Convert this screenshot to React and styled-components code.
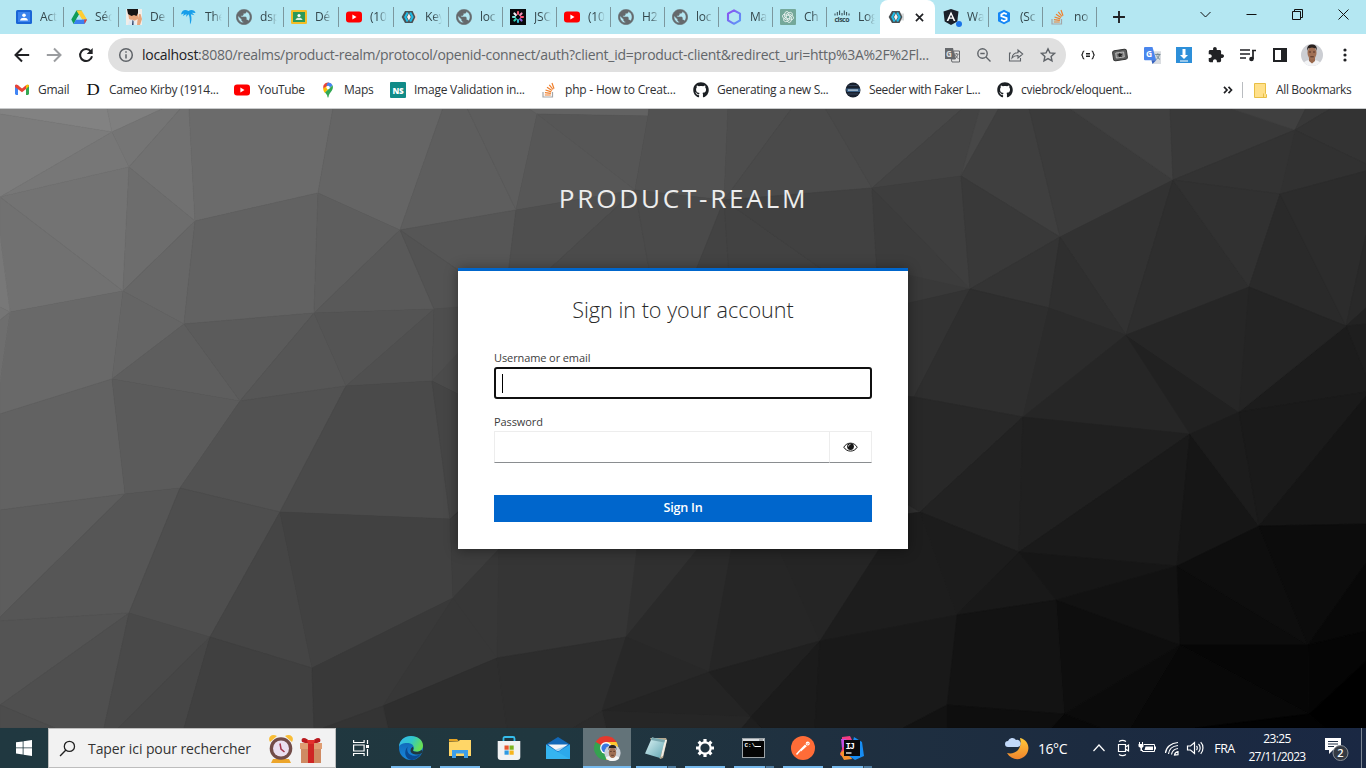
import React from "react";
import styled, { createGlobalStyle, css } from "styled-components";
import { FaGithub } from "react-icons/fa";

const Global = createGlobalStyle`
  * { box-sizing: border-box; }
  html, body { margin: 0; padding: 0; }
  body { width: 1366px; height: 768px; overflow: hidden; font-family: "Open Sans", "Noto Sans", sans-serif; }
  svg { display: block; flex: none; }
`;

const Screen = styled.div`
  width: 1366px;
  height: 768px;
  display: grid;
  grid-template-rows: 34px 38px 36px 620px 40px;
  overflow: hidden;
`;

/* ---------- tab strip ---------- */
const TabStrip = styled.div`
  background: #b4e7f2;
  display: flex;
  padding-left: 8px;
  min-width: 0;
`;
const dividerImage = css`
  background: linear-gradient(#7c979e, #7c979e) left 0 top 7px / 1px 20px no-repeat;
`;
const Tab = styled.div`
  width: ${(p) => p.$w}px;
  height: 34px;
  flex: none;
  display: flex;
  align-items: center;
  padding-left: 8px;
  gap: 8px;
  ${(p) => p.$divider && dividerImage}
  ${(p) => p.$active && css`
    background: #fff;
    gap: 9px;
    border-radius: 8px 8px 0 0;
  `}
`;
const TabLabel = styled.span`
  width: 23px;
  flex: none;
  white-space: nowrap;
  font-size: 12px;
  line-height: 18px;
  letter-spacing: -0.2px;
  color: #34474c;
  mask-image: linear-gradient(90deg, #000 8px, transparent 17px);
`;
const NewTab = styled.div`
  width: 46px;
  display: flex;
  justify-content: center;
  align-items: center;
  ${dividerImage}
`;
const WindowButtons = styled.div`
  margin-left: auto;
  display: flex;
  height: 29px;
  align-items: center;
`;
const WindowButton = styled.div`
  width: 46px;
  display: flex;
  justify-content: center;
`;

/* ---------- toolbar ---------- */
const Toolbar = styled.div`
  background: #fff;
  display: flex;
  align-items: center;
  padding: 4px 5px 0 6px;
`;
const ToolSlot = styled.div`
  width: ${(p) => p.$w || 32}px;
  flex: none;
  display: flex;
  align-items: center;
  justify-content: center;
`;
const Omnibox = styled.div`
  width: 958px;
  height: 34px;
  margin-left: 6px;
  margin-right: 6px;
  border-radius: 17px;
  background: #e0e0e0;
  display: flex;
  align-items: center;
  padding: 0 2px 0 10px;
`;
const Url = styled.div`
  width: 794px;
  margin-left: 8px;
  white-space: nowrap;
  font-size: 14px;
  line-height: 20px;
  letter-spacing: -0.282px;
  color: #63666a;
  span { color: #202124; }
`;

/* ---------- bookmarks ---------- */
const BookmarkBar = styled.div`
  background: #fff;
  display: flex;
  align-items: center;
  padding-left: 14px;
`;
const Bookmark = styled.div`
  width: ${(p) => p.$w}px;
  flex: none;
  display: flex;
  align-items: center;
  gap: ${(p) => p.$gap || 8}px;
  white-space: nowrap;
  font-size: 12px;
  line-height: 18px;
  letter-spacing: ${(p) => p.$ls || -0.25}px;
  color: #303134;
`;
const Divider = styled.div`
  width: 1px;
  height: 16px;
  background: #b9bcc0;
  margin: 0 11px 0 8px;
`;

/* ---------- page ---------- */
const Page = styled.main`
  display: grid;
  grid-template: 620px / 1366px;
  border-top: 1px solid #c8cacb;
  overflow: hidden;
`;
const Facets = styled.svg`
  grid-area: 1 / 1;
  margin-top: -1px;
`;
const Login = styled.div`
  grid-area: 1 / 1;
  z-index: 1;
  display: flex;
  flex-direction: column;
  align-items: center;
`;
const Realm = styled.h1`
  margin: 70px 0 0;
  height: 89px;
  font-size: 26.2px;
  font-weight: 400;
  line-height: 38px;
  letter-spacing: 2.7px;
  color: #ededed;
  padding-left: 1px;
`;
const Card = styled.form`
  width: 450px;
  height: 281px;
  background: #fff;
  border-top: 3px solid #0066cc;
  box-shadow: 0 1px 12px rgba(3, 3, 3, 0.4);
  padding: 24px 36px 0;
`;
const CardTitle = styled.h2`
  margin: 0;
  text-align: center;
  font-size: 21.6px;
  font-weight: 300;
  line-height: 30px;
  height: 54px;
  color: #2a2a2a;
`;
const Label = styled.label`
  display: block;
  height: 18px;
  line-height: 18px;
  font-size: 11px;
  letter-spacing: -0.1px;
  color: #3c3c3c;
`;
const UserField = styled.div`
  height: 32px;
  border: 2px solid #101010;
  border-radius: 3px;
  margin-bottom: 14px;
  padding: 5px 6px;
`;
const Caret = styled.div`
  width: 1px;
  height: 19px;
  background: #000;
`;
const PasswordRow = styled.div`
  display: grid;
  grid-template-columns: 335px 43px;
  height: 32px;
`;
const PasswordField = styled.div`
  border: 1px solid #ededed;
  border-bottom-color: #8a8d90;
  border-right: 0;
`;
const Reveal = styled.div`
  border: 1px solid #ededed;
  border-bottom-color: #8a8d90;
  display: flex;
  align-items: center;
  justify-content: center;
`;
const Submit = styled.div`
  margin-top: 32px;
  height: 27px;
  background: #0066cc;
  color: #fff;
  text-align: center;
  font-size: 12.6px;
  font-weight: 600;
  letter-spacing: -0.2px;
  line-height: 25px;
`;

/* ---------- taskbar ---------- */
const Taskbar = styled.footer`
  display: flex;
  color: #fff;
  background: linear-gradient(90deg, #203840 0%, #20373f 40%, #1f3040 60%, #1c2b40 80%, #1a2843 100%);
`;
const Start = styled.div`
  width: 48px;
  display: flex;
  align-items: center;
  justify-content: center;
`;
const Search = styled.div`
  width: 288px;
  background: #f2f2f2;
  border: 1px solid #bdbdbd;
  display: flex;
  align-items: center;
  padding-left: 10px;
`;
const SearchText = styled.span`
  width: 180px;
  margin-left: 12px;
  white-space: nowrap;
  font-size: 14px;
  letter-spacing: -0.08px;
  color: #333;
`;
const AppSlot = styled.div`
  width: ${(p) => p.$w || 49}px;
  flex: none;
  display: grid;
  grid-template-rows: 36px 2px;
  padding-top: 2px;
  justify-items: center;
  align-items: center;
  background: ${(p) => (p.$active ? "linear-gradient(#637379, #637379) 1px 0 / 48px 40px no-repeat" : "transparent")};
`;
const Underline = styled.div`
  height: 2px;
  width: ${(p) => (p.$full ? 48 : 40)}px;
  justify-self: ${(p) => (p.$full ? "end" : "center")};
  background: ${(p) => (p.$stack
    ? "linear-gradient(90deg, #76b9ed 31px, #31495a 31px 32px, #4f7ca0 32px)"
    : "#76b9ed")};
`;
const Tray = styled.div`
  margin-left: auto;
  width: 362px;
  display: flex;
  align-items: center;
  font-size: 12px;
`;
const TrayItem = styled.div`
  width: ${(p) => p.$w}px;
  flex: none;
  display: flex;
  align-items: center;
  justify-content: center;
  white-space: nowrap;
`;
const Temperature = styled(TrayItem)`
  font-size: 14px;
  letter-spacing: -0.45px;
`;
const Language = styled(TrayItem)`
  font-size: 12.5px;
  letter-spacing: -0.5px;
`;
const Clock = styled.div`
  width: 84px;
  text-align: center;
  font-size: 12px;
  line-height: 18px;
  letter-spacing: -0.65px;
  margin-bottom: 1px;
`;
const ShowDesktop = styled.div`
  align-self: stretch;
  margin-left: auto;
  width: 5px;
  border-left: 1px solid #7b8593;
`;

/* ---------- small icons ---------- */
const Svg = ({ s = 16, w, h, vb, children }) => (
  <svg width={w || s} height={h || s} viewBox={vb || "0 0 16 16"} fill="none">{children}</svg>
);
const Contact = () => (
  <Svg><rect y="1" width="16" height="14" rx="1.5" fill="#1a65d6" /><rect x="2" y="3" width="12" height="10" fill="#3b83ee" /><circle cx="8" cy="6.3" r="1.8" fill="#fff" /><path d="M4 11.5c.4-2 2-2.7 4-2.7s3.600.7 4 2.700z" fill="#fff" /></Svg>
);
const Classroom = () => (
  <Svg><rect y="1" width="16" height="14" rx="1.200" fill="#f4bd26" /><rect x="2" y="3" width="12" height="10" fill="#2b9958" /><circle cx="8" cy="6.500" r="1.600" fill="#fff" /><path d="M4.500 11c.4-1.700 1.700-2.200 3.500-2.200s3.100.5 3.500 2.200z" fill="#d9efdf" /></Svg>
);
const Drive = () => (
  <Svg><path d="M5.400 1.500h5.200l-5.500 9.300L2.600 15 .3 10.500z" fill="#109c58" /><path d="M5.400 1.500h5.200L16 10.500h-5z" fill="#ffcd33" /><path d="M5 10.500h11l-2.500 4.500H2.600z" fill="#3b7ff0" /><path d="M8 5.800 5.100 10.500H11z" fill="#b4e7f2" /><path d="M13.200 10.500H16l-2.500 4.500z" fill="#e74335" /></Svg>
);
const Character = () => (
  <Svg><rect width="16" height="16" fill="#f1ede8" /><path d="M2 3h10v7l-4 2-5-2z" fill="#e6a47a" /><path d="M1 0h11v4l-1.500 3L8 6 5.500 7 2 5z" fill="#171515" /><path d="M13 5h1.500l1.500 5-2 6h-3l.5-5z" fill="#e6a47a" /><path d="M3 12l3-1.500L9 12l1 4H2z" fill="#dfe9f3" /><path d="M6.500 11l1 1v4H6z" fill="#263b62" /></Svg>
);
const Palm = () => (
  <Svg><path d="M0 5.500C1 1 4 0 7.500 2 10 .2 14 1 14.500 4L11 3.800l2.500 2.400L9.800 5.200C11 9 10.500 13 9 15.600 9 11 8.800 7.500 7.600 5.300L5 8 5.600 5 1.800 7 3 4.500z" fill="#179eea" /></Svg>
);
const Earth = () => (
  <Svg vb="1.500 1.500 21 21"><path d="M12 2C6.480 2 2 6.480 2 12s4.480 10 10 10 10-4.480 10-10S17.520 2 12 2zm-1 17.930c-3.950-.490-7-3.850-7-7.930 0-.620.080-1.210.210-1.790L9 15v1c0 1.100.9 2 2 2v1.930zm6.900-2.540c-.260-.810-1-1.390-1.900-1.390h-1v-3c0-.550-.450-1-1-1H8v-2h2c.550 0 1-.450 1-1V7h2c1.100 0 2-.9 2-2v-.410c2.930 1.190 5 4.060 5 7.410 0 2.080-.8 3.970-2.100 5.390z" fill="#65696c" stroke="#65696c" strokeWidth=".8" /></Svg>
);
const Keycloak = () => (
  <Svg><path d="M11 4.500h5v7h-5z" fill="#d9dcdd" /><path d="M4 2h7.600l2.800 6-2.800 6H4L.6 8z" fill="#4b5053" /><path d="M6.600 3.600 4.200 8l2.400 4.400M9.200 3.600 11.600 8l-2.400 4.400" stroke="#20bde8" strokeWidth="2" /><path d="M7.900 4.500l1.900 3.500-1.900 3.500L6 8z" fill="#f3f5f6" /></Svg>
);
const YoutubeIcon = () => (
  <Svg><rect y="2.500" width="16" height="11" rx="3" fill="#f00" /><path d="M6.400 5.600v4.800L10.500 8z" fill="#fff" /></Svg>
);
const Json = () => (
  <Svg><rect width="16" height="16" fill="#080a0d" /><g strokeWidth="2.100" strokeLinecap="round"><path d="M8 3v2" stroke="#f15a72" /><path d="M11.600 4.400l-1.500 1.500" stroke="#f093b8" /><path d="M13 8h-2" stroke="#ff4c70" /><path d="M11.600 11.600l-1.500-1.500" stroke="#8e61d8" /><path d="M8 13v-2" stroke="#38bbd1" /><path d="M4.400 11.600l1.500-1.500" stroke="#31d9b4" /><path d="M3 8h2" stroke="#79e4dd" /><path d="M4.400 4.400l1.500 1.500" stroke="#f3eef5" /></g></Svg>
);
const Hexagon = () => (
  <Svg><defs><linearGradient id="hex" x1="0" y1="0" x2="1" y2="1"><stop stopColor="#8d4cf0" /><stop offset="1" stopColor="#5a9df8" /></linearGradient></defs><path d="M8 1.300l6 3.400v6.700L8 14.800l-6-3.400V4.700z" stroke="url(#hex)" strokeWidth="2.100" strokeLinejoin="round" /></Svg>
);
const OpenAI = () => (
  <Svg><rect width="16" height="16" rx="1" fill="#74a89a" /><g stroke="#fff" strokeWidth=".8">{[0, 60, 120, 180, 240, 300].map((a) => <path key={a} transform={`rotate(${a} 8 8)`} d="M6.200 9V5.300l3-1.700c2-1 4 1 2.800 3" />)}</g></Svg>
);
const Cisco = () => (
  <Svg><path d="M1 4.500v2M3.300 3v3.500M5.600 1.500v4.500M8 4v2.500M10.300 1.500v4.500M12.600 3v3.500M15 4.500v2" stroke="#30474e" /><text x="8" y="12.800" textAnchor="middle" fontFamily="Open Sans" fontWeight="700" fontSize="7" textLength="15" fill="#30474e">cisco</text></Svg>
);
const AngularBox = styled.div`
  width: 16px;
  height: 19px;
  overflow: visible;
`;
const Angular = () => (
  <AngularBox><svg width="19" height="19" viewBox="0 0 19 19"><path d="M8 1l7.500 2.500-1.200 10L8 17l-6.300-3.500L.5 3.500z" fill="#1b2029" /><path d="M8 3.500 3.600 13h1.800l1-2.300h3.300l1 2.300h1.700zM8 6.800l1.300 2.600H6.800z" fill="#fff" /><circle cx="16" cy="16" r="3" fill="#1a73e8" /></svg></AngularBox>
);
const BlueS = () => (
  <Svg><path d="M8 .8l6 3v8.400l-6 3-6-3V3.800z" fill="#1586f5" /><path d="M10.800 5.300 8 4 5.300 5.600v1.600l5.300 2v1.500L8 12.200 5.100 10.800" stroke="#fff" strokeWidth="1.800" /></Svg>
);
const StackIcon = () => (
  <Svg><path d="M2 10v5h9.500v-5" stroke="#a4a6a8" strokeWidth="1.200" /><g stroke="#ef7f2c" strokeWidth="1.200"><path d="M3.800 13h6M3.900 10.600l6 .7M4.500 8l5.800 1.900M6 5.200l5 3.400M8.300 2.800l3.700 4.700M11 1l2 5.700" /></g></Svg>
);
const Gmail = () => (
  <Svg><path d="M1 3h3v10H2L1 12z" fill="#4285f4" /><path d="M12 3h3v9l-1 1h-2z" fill="#34a853" /><path d="M1 3.500C1.500 2 3 2.500 4 3.200L8 6.400v3.800L1 5z" fill="#ea4335" /><path d="M8 6.400l4-3.200V7l-4 3.200z" fill="#ea4335" /><path d="M12 3.200c1.500-1.200 3-.5 3 1L12 7z" fill="#fbbc04" /></Svg>
);
const LetterD = () => (
  <Svg h={20} vb="0 0 16 20"><text x="1.500" y="15.400" fontFamily="Liberation Serif" fontSize="16.500" textLength="13" lengthAdjust="spacingAndGlyphs" fill="#111">D</text></Svg>
);
const MapPin = () => (
  <Svg><path d="M8 .5a5 5 0 0 0-3.900 1.800L8 5.500 11.500 2A5 5 0 0 0 8 .5z" fill="#ea4335" /><path d="M8 .5a5 5 0 0 1 4.600 2.800L8.800 6.800 6 3.500z" fill="#4285f4" /><path d="M4.100 2.300A5.300 5.300 0 0 0 3.200 7L7.500 3.800z" fill="#ea4335" /><path d="M3.200 6.500 7 4l1 3-3 4C3.800 9.500 3.200 8 3.200 6.500z" fill="#fbbc04" /><path d="M12.600 3.300c1.700 5.200-3.500 6.700-4.100 11.700-.2.700-.8.700-1 0-.2-1.900-1.300-3-2.500-4.400z" fill="#34a853" /><circle cx="8.100" cy="5.500" r="1.700" fill="#fff" /></Svg>
);
const NsIcon = () => (
  <Svg><rect width="16" height="16" rx="1" fill="#118b88" /><text x="8" y="11.500" textAnchor="middle" fontFamily="Open Sans" fontSize="8.500" fontWeight="800" textLength="11" lengthAdjust="spacingAndGlyphs" fill="#fff">NS</text></Svg>
);
const Seeder = () => (
  <Svg><circle cx="8" cy="8" r="7.500" fill="#18202d" /><path d="M3.500 3.500h9M3 12h10" stroke="#34435a" /><path d="M1 6.500h14v3.500H2z" fill="#375d84" /><path d="M3 7.500h10v1.200H3z" fill="#c8d4de" /></Svg>
);
const GithubIcon = () => <FaGithub size={16} color="#1b1f23" />;
const Folder = () => (
  <Svg w={13} h={15} vb="0 0 13 15"><path d="M.5.500h11v10l1 1v3H.5z" fill="#ffe08a" stroke="#e8bf45" /><path d="M9.500 10.500v4" stroke="#e8bf45" /></Svg>
);

const TABS = [
  [55, Contact, "Act"], [55, Drive, "Séc"], [55, Character, "De"], [55, Palm, "Thé"],
  [55, Earth, "dsp"], [55, Classroom, "Dé"], [55, YoutubeIcon, "(10"], [55, Keycloak, "Key"],
  [54, Earth, "loc"], [54, Json, "JSO"], [54, YoutubeIcon, "(10"], [54, Earth, "H2"],
  [54, Earth, "loc"], [54, Hexagon, "Ma"], [54, OpenAI, "Ch"], [54, Cisco, "Log"],
];
const LATER_TABS = [[53, Angular, "Wa"], [54, BlueS, "(Sc"], [54, StackIcon, "no"]];

const BOOKMARKS = [
  [71, Gmail, "Gmail"], [149, LetterD, "Cameo Kirby (1914..."], [86, YoutubeIcon, "YouTube", -0.4],
  [70, MapPin, "Maps"], [151, NsIcon, "Image Validation in..."], [152, StackIcon, "php - How to Creat...", -0.2],
  [152, GithubIcon, "Generating a new S...", -0.3], [152, Seeder, "Seeder with Faker L...", -0.35],
  [225, GithubIcon, "cviebrock/eloquent...", -0.3],
];

/* Facets of the low-poly backdrop: [grey level, outline] */
const FACETS = [
  [130, "0,108 107,108 112,132 0,114"], [127, "107,108 164,108 112,132"], [124, "0,114 112,132 0,197"],
  [119, "112,132 129,167 0,197"], [117, "164,108 181,108 129,167 112,132"], [113, "181,108 189,108 195,221 129,167"],
  [107, "189,108 333,108 318,193 195,221"], [101, "333,108 443,108 400,230 318,193"], [94, "443,108 467,108 516,210 400,230"],
  [115, "0,197 129,167 123,291"], [113, "0,197 123,291 10,312 0,236"], [120, "0,236 10,312 0,307"], [117, "0,307 10,312 0,320"],
  [109, "129,167 195,221 123,291"], [103, "195,221 184,324 123,291"], [98, "195,221 318,193 314,313 184,324"],
  [94, "318,193 400,230 314,313"], [89, "400,230 434,309 314,313"], [105, "10,312 123,291 112,379 0,414 0,382"],
  [110, "0,320 10,312 0,382"], [101, "123,291 184,324 112,379"], [94, "184,324 240,401 112,379"],
  [91, "184,324 314,313 240,401"], [86, "314,313 346,386 240,401"], [84, "314,313 434,309 346,386"],
  [80, "434,309 432,381 346,386"], [86, "400,230 516,210 508,275 458,270"], [83, "400,230 458,270 470,308 434,309"],
  [78, "434,309 470,306 470,342 432,381"], [75, "432,381 470,340 470,400"], [98, "0,414 112,379 125,494 0,510"],
  [91, "112,379 240,401 180,488 125,494"], [82, "240,401 346,386 280,512 180,488"], [74, "346,386 432,381 450,519 280,512"],
  [69, "432,381 470,400 470,500 450,519"], [93, "0,510 125,494 0,617"], [86, "125,494 180,488 129,613 0,621 0,617"],
  [78, "180,488 280,512 210,637 129,613"], [69, "280,512 312,668 210,637"], [65, "280,512 450,519 453,598 312,668"],
  [61, "450,519 499,480 499,549 453,598"], [84, "0,621 129,613 0,705"], [79, "129,613 104,728 55,728 0,705"],
  [76, "0,705 55,728 0,728"], [73, "129,613 210,637 118,728 104,728"], [70, "210,637 184,728 118,728"],
  [64, "210,637 312,668 314,728 184,728"], [57, "312,668 453,598 383,706 323,728 314,728"], [55, "453,598 497,658 383,706"],
  [46, "383,706 497,658 507,728 388,728"], [52, "383,706 388,728 323,728"], [55, "453,598 499,549 497,658"],
  [53, "499,540 638,540 626,637 497,658"], [45, "497,658 626,637 602,711 573,728 507,728"], [48, "638,540 705,540 626,637"],
  [42, "705,540 733,540 709,672 626,637"], [38, "733,540 775,540 820,641 709,672"], [37, "775,540 885,540 820,641"],
  [40, "626,637 709,672 602,711"], [36, "709,672 751,717 602,711"], [38, "602,711 751,717 742,728 606,728"],
  [43, "602,711 606,728 573,728"], [32, "709,672 820,641 751,717"], [27, "820,641 815,728 761,728 751,717"],
  [30, "742,728 751,717 761,728"], [29, "885,540 900,515 920,512 957,615 820,641"], [25, "820,641 957,615 947,705 903,728 815,728"],
  [93, "467,108 528,108 537,114 516,210"], [98, "528,108 649,108 648,116 537,114"], [86, "537,114 648,116 635,190"],
  [87, "537,114 635,190 516,210"], [79, "516,210 635,190 543,275 508,275"], [82, "649,108 728,108 724,200 635,190 648,116"],
  [77, "728,108 792,108 724,200"], [74, "792,108 825,108 872,188 724,200"], [72, "825,108 963,108 872,188"],
  [75, "635,190 650,275 543,275"], [74, "635,190 724,200 694,275 650,275"], [67, "724,200 729,275 694,275"],
  [66, "724,200 830,275 729,275"], [65, "724,200 872,188 877,275 830,275"], [60, "872,188 970,289 877,275"],
  [67, "872,188 963,108 980,108 961,176"], [71, "980,108 999,108 961,176"], [62, "872,188 961,176 970,289"],
  [63, "999,108 1029,108 1060,237 961,176"], [57, "961,176 1060,237 970,289"], [59, "1029,108 1069,108 1173,180 1060,237"],
  [64, "1069,108 1170,108 1173,180"], [57, "1170,108 1229,108 1295,130 1173,180"], [64, "1229,108 1306,108 1295,130"],
  [56, "1306,108 1332,108 1295,130"], [51, "1332,108 1366,108 1366,164 1295,130"], [49, "1295,130 1366,164 1366,171 1280,194"],
  [51, "1173,180 1295,130 1280,194"], [50, "1060,237 1173,180 1126,335"], [46, "1173,180 1249,287 1126,335"],
  [49, "1173,180 1280,194 1249,287"], [42, "1280,194 1346,326 1249,287"], [44, "1280,194 1366,171 1366,235 1346,326"],
  [41, "1366,235 1366,308 1346,326"], [34, "1346,326 1366,308 1366,324"], [30, "1346,326 1366,324 1366,376"],
  [28, "1346,326 1366,376 1366,392 1239,412"], [52, "970,289 1060,237 1049,308"], [47, "1060,237 1126,335 1049,308"],
  [57, "877,268 970,289 906,304 877,310"], [51, "900,305 970,289 914,397 900,400"], [46, "970,289 1049,308 1023,417 914,397"],
  [43, "1049,308 1126,335 1023,417"], [38, "1126,335 1190,434 1023,417"], [33, "1126,335 1239,412 1190,434"],
  [38, "1126,335 1249,287 1239,412"], [36, "1249,287 1346,326 1239,412"], [40, "900,395 914,397 1023,417 920,512 900,500"],
  [34, "1023,417 1019,552 920,512"], [32, "1023,417 1190,434 1019,552"], [26, "1190,434 1177,566 1019,552"],
  [22, "1190,434 1259,526 1177,566"], [28, "1190,434 1239,412 1259,526"], [26, "1239,412 1366,392 1366,396 1259,526"],
  [21, "1366,396 1366,524 1259,526"], [28, "920,512 1019,552 957,615"], [25, "1019,552 1056,600 957,615"],
  [22, "1019,552 1177,566 1056,600"], [18, "1056,600 1177,566 1180,645"], [14, "1056,600 1180,645 1064,714"],
  [19, "957,615 1056,600 1064,714 947,705"], [12, "1177,566 1308,645 1180,645"], [14, "1177,566 1259,526 1308,645"],
  [12, "1259,526 1366,524 1366,563 1308,645"], [8, "1308,645 1366,563 1366,631"], [5, "1308,645 1366,631 1366,661 1309,714"],
  [6, "1180,645 1308,645 1309,714"], [8, "1180,645 1309,714 1195,728 1130,728"], [11, "1064,714 1180,645 1130,728 1101,728"],
  [8, "1064,714 1101,728 1051,728"], [14, "947,705 1064,714 1051,728 947,728"], [18, "947,705 947,728 903,728"],
  [0, "1309,714 1366,661 1366,728 1325,728"], [2, "1195,728 1309,714 1325,728"],
];

const Backdrop = () => (
  <Facets width="1366" height="620" viewBox="0 108 1366 620">
    <rect y="108" width="1366" height="620" fill="#303030" />
    {FACETS.map(([g, pts]) => (
      <polygon key={pts} points={pts} fill={`rgb(${g},${g},${g})`} stroke={`rgb(${g},${g},${g})`} strokeWidth=".6" />
    ))}
  </Facets>
);

/* ---------- toolbar drawings ---------- */
const Line = ({ s = 20, d, c = "#202124", sw = 2, children }) => (
  <svg width={s} height={s} viewBox="0 0 20 20" fill="none" stroke={c} strokeWidth={sw}>{d && <path d={d} />}{children}</svg>
);
const ReloadIcon = () => (
  <Line d="M14.800 6.300A6 6 0 1 0 16 11.300"><path d="M16.700 3v6h-6z" fill="#202124" stroke="none" /></Line>
);
const PuzzleIcon = () => (
  <Svg vb="1 1 22 22"><path d="M20.500 11H19V7c0-1.100-.9-2-2-2h-4V3.500C13 2.120 11.880 1 10.500 1S8 2.120 8 3.500V5H4c-1.100 0-1.990.9-1.990 2v3.800H3.500c1.490 0 2.700 1.210 2.700 2.700s-1.210 2.700-2.700 2.700H2V20c0 1.100.9 2 2 2h3.800v-1.500c0-1.490 1.210-2.700 2.700-2.700 1.490 0 2.700 1.210 2.700 2.700V22H17c1.100 0 2-.9 2-2v-4h1.500c1.380 0 2.500-1.120 2.500-2.500S21.880 11 20.500 11z" fill="#202124" /></Svg>
);
const TranslatePage = () => (
  <Svg><path d="M1 1h8l2.500 11H1z" fill="#67696c" /><path d="M9.500 4h6v11H8l-.8-3h4.200z" fill="#e4e4e4" stroke="#67696c" /><text x="2" y="9.500" fontFamily="Open Sans" fontWeight="700" fontSize="8" fill="#e0e0e0">G</text><path d="M10.500 7h4M12.500 6v1M14 7c-.5 2.500-1.600 3.700-3 4.700M11.500 8c.6 1.700 1.500 2.700 3 3.600" stroke="#67696c" strokeWidth=".9" /></Svg>
);
const GoogleTranslate = () => (
  <Svg s={17}><path d="M6 4h10v12H8z" fill="#dadde1" /><path d="M1 0h7l3.500 12.500H1a1 1 0 0 1-1-1V1a1 1 0 0 1 1-1z" fill="#4a86ed" /><path d="M8 16l3.500-3.500H7z" fill="#3461bf" /><text x="1.800" y="9" fontFamily="Open Sans" fontWeight="700" fontSize="8" fill="#fff">G</text><path d="M10.500 7h5M13 6v1M14.500 7c-.5 2.500-1.600 3.700-3 4.700M12 8c.6 1.700 1.500 2.700 3 3.600" stroke="#6c8490" strokeWidth=".9" /></Svg>
);
const Portrait = ({ s = 22 }) => (
  <svg width={s} height={s} viewBox="0 0 22 22">
    <defs><clipPath id={`face${s}`}><circle cx="11" cy="11" r="11" /></clipPath></defs>
    <g clipPath={`url(#face${s})`}>
      <rect width="22" height="22" fill="#ccced3" />
      <path d="M1 22c1-5 5-6 10-6s9 1 10 6z" fill="#f3f4f6" />
      <path d="M8 13h6v4l-3 2.500L8 17z" fill="#99684c" />
      <ellipse cx="11" cy="9" rx="4.500" ry="6.500" fill="#a06f54" />
      <path d="M6.300 7C5.500 2 8 .5 11 .5s5.500 1.500 4.700 6.500L15 4.400 11 3.600 7 4.400z" fill="#29211f" />
      <path d="M7.800 8h2.200M12 8h2.200M9.300 12.800h3.500" stroke="#523327" strokeWidth="1" />
    </g>
  </svg>
);
const EyeIcon = () => (
  <svg width="15" height="12" viewBox="0 0 15 12"><path d="M.8 6.200C3.800.8 11.200.8 14.200 6.200 11.200 11.400 3.800 11.400.8 6.200z" fill="#fff" stroke="#151515" strokeWidth="1" /><circle cx="7.500" cy="5.600" r="3.400" fill="#151515" /><path d="M5.400 5.500c0-1.200.9-2 2-2" stroke="#fff" strokeWidth=".8" fill="none" /></svg>
);

/* ---------- taskbar drawings ---------- */
const WinLogo = () => (
  <Svg><path d="M0 2.300 6.700 1.400v6.100H0zM7.500 1.300 16 0v7.500H7.500zM0 8.300h6.700v6.100L0 13.500zM7.500 8.300H16V16l-8.500-1.200z" fill="#fff" /></Svg>
);
const AlarmClock = () => (
  <svg width="26" height="29" viewBox="0 0 26 29"><path d="M2 8C-1 3 4-1 9 2zM24 8c3-5-2-9-7-6z" fill="#f9bd35" /><path d="M5 25h16l2 4H3z" fill="#eca52b" /><circle cx="13" cy="14.500" r="11.300" fill="#724c49" /><circle cx="13" cy="14.500" r="8" fill="#eadff0" /><path d="M12 9.500l1 5.500 3.500 3" stroke="#a33349" strokeWidth="1.500" fill="none" /></svg>
);
const Gift = () => (
  <svg width="24" height="26" viewBox="0 0 24 26"><path d="M2 10h20v16H2z" fill="#cf8a62" /><path d="M1 6h22v6H1z" fill="#df9d72" /><path d="M9 6h6v20H9z" fill="#cf2524" /><path d="M12 6C7-1 1 0 3 5l3 1zM12 6c5-7 11-6 9-1l-3 1z" fill="#b9191e" /><path d="M8 3h8l-1 4H9z" fill="#e3312d" /></svg>
);
const GiftSlot = styled.div`
  width: 33px;
  padding-top: 4px;
  display: flex;
  justify-content: center;
`;
const TaskView = () => (
  <svg width="17" height="16" viewBox="0 0 17 16" fill="none" stroke="#fff" strokeWidth="1.200"><path d="M.6 0v2.500h10.500V0M.6 16v-2.500h10.500V16M.6 5h10.500v6H.6zM14.500 0v4M14.500 9v7" /><path d="M13 5h3v3h-3z" fill="#fff" stroke="none" /></svg>
);
const EdgeIcon = () => (
  <svg width="24" height="24" viewBox="0 0 24 24"><defs><linearGradient id="e1" x2="1" y2=".4"><stop stopColor="#35b8f1" /><stop offset=".55" stopColor="#31c7c9" /><stop offset="1" stopColor="#67df55" /></linearGradient><linearGradient id="e2" x2="0" y2="1"><stop stopColor="#0f5fae" /><stop offset="1" stopColor="#1788dc" /></linearGradient></defs><circle cx="12" cy="12" r="12" fill="url(#e2)" /><path d="M0 11C0 4.500 5.500 0 12 0s12 4 12 9.500c0 4-3 6.300-6.500 6.300-2.500 0-4-.9-3.300-2 1.500-2 .4-5.300-3-6.300C7 6.200 1 7.500 0 11z" fill="url(#e1)" /><path d="M8.700 10.500c-1.700 4.500.8 9 6.800 9.300 3 .1 5-1.100 6.500-2.300C20 21.500 16 24 12 24 6.500 23 4 16 8.700 10.500z" fill="#0b4a92" /><path d="M14.200 13.800c-.7 1.100.8 2 3.300 2 2 0 3.800-.8 4.900-1.900 1.600.5 1.600 2.200.2 3.300-3.800 2.500-11.100 1.100-11.100-2.500 0-2 1.100-3.300 2.300-4 .8 1 .9 2.200.4 3.100z" fill="#203840" /></svg>
);
const ExplorerIcon = () => (
  <svg width="22" height="20" viewBox="0 0 22 20"><path d="M0 1h8l2 2.500H0z" fill="#e6a424" /><path d="M0 4l9-.500L11 2h11v16H0z" fill="#ffd667" /><path d="M3 20v-8h16v8h-4v-4H7v4z" fill="#3e9fe9" /><path d="M7 15.500h8V18H7z" fill="#ffd667" /></svg>
);
const StoreIcon = () => (
  <svg width="24" height="24" viewBox="0 0 24 24"><path d="M6.500 5V2.500c0-.8.500-1.500 1.500-1.500h8c1 0 1.500.7 1.500 1.500V5" stroke="#35bdec" strokeWidth="1.800" fill="none" /><path d="M.7 5h22.600v16a3 3 0 0 1-3 3H3.700a3 3 0 0 1-3-3z" fill="#f1f2f3" /><path d="M7.500 9.500h4.200v4.200H7.500z" fill="#e8552d" /><path d="M12.500 9.500h4.200v4.200h-4.200z" fill="#7db41f" /><path d="M7.500 14.500h4.200v4.200H7.500z" fill="#2e9ae3" /><path d="M12.500 14.500h4.200v4.200h-4.200z" fill="#f6b51c" /></svg>
);
const MailIcon = () => (
  <svg width="24" height="22" viewBox="0 0 24 22"><path d="M0 7.500 12 0l12 7.500V22H0z" fill="#1268b7" /><path d="M0 7.500 12 15l12-7.500V22H0z" fill="#35b4f0" /><path d="M2 7.500h20l-9 6.600h-2z" fill="#f4f5f7" /><path d="M24 7.500V22L8 13z" fill="#1d96e4" opacity=".35" /></svg>
);
const ChromeIcon = () => (
  <svg width="28" height="28" viewBox="0 0 28 28"><path d="M13 14 2.600 8A12 12 0 0 1 23.500 8z" fill="#e5392d" /><path d="M2.600 8A12 12 0 0 0 13 26l5-9z" fill="#35a250" /><path d="M13 8h10.500A12 12 0 0 1 13 26l5-9z" fill="#fdc82f" /><circle cx="13" cy="14" r="5.900" fill="#fff" /><circle cx="13" cy="14" r="4.600" fill="#3879e2" /><svg x="11" y="10.500" width="17" height="17" viewBox="0 0 22 22"><circle cx="11" cy="11" r="10.500" fill="#cbd0d7" /><path d="M2 17c2-2 5-2 9-2s7 0 9 2c-3 5.500-14 6-18 0z" fill="#f5f5f5" /><ellipse cx="11" cy="10.500" rx="4.800" ry="7" fill="#a06f54" /><path d="M6.200 7.500C5.200 2 8 .5 11 .5s5.800 1.500 4.800 7L15 4.600H7z" fill="#29211f" /><path d="M7.800 9h2.200M12 9h2.200M9.300 14h3.500" stroke="#523327" /></svg></svg>
);
const NotepadIcon = () => (
  <svg width="24" height="24" viewBox="0 0 24 24"><path d="M6 2h16l1 2-4 18-3 1z" fill="#b4a78e" /><path d="M20 4 17 21l2-1 4-16z" fill="#f1eee6" /><defs><linearGradient id="np" y2="1" x2="1"><stop stopColor="#dff5f6" /><stop offset="1" stopColor="#60a5b2" /></linearGradient></defs><path d="M8 1.500 21 4l-5 18L1 17.500z" fill="url(#np)" /><path d="M8 1.500 21 4l-.7 2.500L7 4z" fill="#78a6ad" /></svg>
);
const GearIcon = () => (
  <svg width="20" height="20" viewBox="0 0 20 20"><g stroke="#fff" strokeWidth="3.200">{[0, 45, 90, 135].map((a) => <path key={a} d="M10 1v3.500M10 15.500V19" transform={`rotate(${a} 10 10)`} />)}</g><circle cx="10" cy="10" r="5.700" fill="none" stroke="#fff" strokeWidth="2.200" /></svg>
);
const TerminalIcon = () => (
  <svg width="23" height="20" viewBox="0 0 23 20"><rect x=".5" y=".5" width="22" height="19" fill="#050505" stroke="#9da4a8" /><path d="M1 1h21v2H1z" fill="#d9dde0" /><path d="M17 2h4" stroke="#6d7377" /><text x="2.500" y="9.300" fontFamily="Liberation Mono" fontWeight="700" fontSize="6" fill="#fff">C:\</text><path d="M13 8.500h6" stroke="#fff" /></svg>
);
const PostmanIcon = () => (
  <svg width="24" height="24" viewBox="0 0 24 24"><circle cx="12" cy="12" r="12" fill="#ff6c37" /><path d="M8.500 14 14 8.500l1.800 1.700L10 15.500z" fill="#fff" /><path d="M9 14.500 5.500 18.500" stroke="#fff" strokeWidth="1.500" /><circle cx="16.700" cy="7.500" r="2" fill="#fff" /><path d="M15.700 7.700c.7.600 1.700.3 2-.4" stroke="#ff6c37" strokeWidth=".8" fill="none" /></svg>
);
const IntelliJIcon = () => (
  <svg width="24" height="24" viewBox="0 0 24 24"><path d="M2 1 10 0l4 8-8 14-6-3 2-6z" fill="#f43b82" /><path d="M0 17l7-5 5 11-8 1z" fill="#f8912e" /><path d="M14 1l8 5 2 14-9 4-6-4z" fill="#178df3" /><path d="M1 3l5 0 3 5-7 4z" fill="#c34de0" /><rect x="4" y="4" width="16" height="16" fill="#0a0a0c" /><text x="5.500" y="12.500" fontFamily="Liberation Mono" fontWeight="700" fontSize="9" textLength="9.500" fill="#fff">IJ</text><path d="M6 17h5.500" stroke="#fff" strokeWidth="1.300" /></svg>
);
const WeatherIcon = () => (
  <svg width="24" height="23" viewBox="0 0 24 23"><defs><linearGradient id="moon" x2="0" y2="1"><stop stopColor="#ffca39" /><stop offset="1" stopColor="#f0842d" /></linearGradient></defs><path d="M15 1c9 2 11 12 5 18-5 5-14 4-18-3 7 2 16-3 13-15z" fill="url(#moon)" /><path d="M3 10a3 3 0 0 1 0-6 4.500 4.500 0 0 1 8-1 3.600 3.600 0 0 1 2 7z" fill="#c2d9fa" /></svg>
);
const TrayLine = ({ d, w = 18 }) => (
  <svg width={w} height="18" viewBox={`0 0 ${w} 18`} fill="none" stroke="#fff" strokeWidth="1.200"><path d={d} /></svg>
);
const BatteryIcon = () => (
  <svg width="18" height="18" viewBox="0 0 18 18" fill="none" stroke="#fff"><path d="M6 5.500h10.500v7H4.500V11M17.500 7.500v3M1.500 3v2M4.500 3v2" /><path d="M.5 5h5v2.500L4 9v3H2.500V9L.5 7.500z" fill="#fff" stroke="none" /><path d="M7.500 7.500h7.500v3.500H6.500z" fill="#fff" stroke="none" /></svg>
);

const APPS = [
  [EdgeIcon, "one"], [ExplorerIcon, "one"], [StoreIcon, ""], [MailIcon, ""], [ChromeIcon, "active"],
  [NotepadIcon, "stack"], [GearIcon, "one"], [TerminalIcon, "stack"], [PostmanIcon, "one"], [IntelliJIcon, "stack"],
];

export default function App() {
  return (
    <Screen>
      <Global />
      <TabStrip>
        {TABS.map(([w, Icon, label], i) => (
          <Tab key={i} $w={w} $divider={i > 0}><Icon /><TabLabel>{label}</TabLabel></Tab>
        ))}
        <Tab $w={55} $active>
          <Keycloak />
          <Line s={13} d="M4.500 4.500l11 11m0-11l-11 11" sw={2.600} />
        </Tab>
        {LATER_TABS.map(([w, Icon, label], i) => (
          <Tab key={i} $w={w} $divider={i > 0}><Icon /><TabLabel>{label}</TabLabel></Tab>
        ))}
        <NewTab><Line s={14} d="M10 1.500v17M1.500 10h17" sw={2.700} /></NewTab>
        <WindowButtons>
          <WindowButton><Svg s={11} vb="0 0 11 11"><path d="M.5 3l5 5 5-5" stroke="#111" /></Svg></WindowButton>
          <WindowButton><Svg s={11} vb="0 0 11 11"><path d="M.5 5.500h10" stroke="#111" /></Svg></WindowButton>
          <WindowButton><Svg s={11} vb="0 0 11 11"><path d="M.5 2.500h8v8h-8zM2.500 2.500v-2h8v8h-2" stroke="#111" /></Svg></WindowButton>
          <WindowButton><Svg s={11} vb="0 0 11 11"><path d="M.5.5l10 10m0-10l-10 10" stroke="#111" /></Svg></WindowButton>
        </WindowButtons>
      </TabStrip>

      <Toolbar>
        <ToolSlot><Line d="M17.200 10H4M10 3.500 3.500 10l6.500 6.500" /></ToolSlot>
        <ToolSlot><Line c="#9b9da0" d="M2.800 10H16M10 3.500l6.500 6.500-6.500 6.500" /></ToolSlot>
        <ToolSlot><ReloadIcon /></ToolSlot>
        <Omnibox>
          <Svg><circle cx="8" cy="8" r="6.300" stroke="#5f6368" strokeWidth="1.500" /><path d="M8 7.200v4.300M8 4.300v1.500" stroke="#5f6368" strokeWidth="1.500" /></Svg>
          <Url><span>localhost</span>:8080/realms/product-realm/protocol/openid-connect/auth?client_id=product-client&amp;redirect_uri=http%3A%2F%2Fl...</Url>
          <ToolSlot><TranslatePage /></ToolSlot>
          <ToolSlot><Svg><circle cx="6.500" cy="6.500" r="4.700" stroke="#5f6368" strokeWidth="1.400" /><path d="M4.300 6.500h4.400M10 10l4.500 4.500" stroke="#5f6368" strokeWidth="1.400" /></Svg></ToolSlot>
          <ToolSlot><Svg><path d="M3 6H1.500v8h11v-3M4 11c.4-3.500 2.700-5.300 6-5.300V3l4.700 4-4.700 4V8.500C7.500 8.500 5.500 9.200 4 11z" stroke="#5f6368" strokeWidth="1.100" /></Svg></ToolSlot>
          <ToolSlot><Svg><path d="M8 1.800l1.900 4.100 4.500.5-3.300 3 .9 4.400-4-2.200-4 2.200.9-4.400-3.300-3 4.500-.5z" stroke="#5f6368" strokeWidth="1.400" /></Svg></ToolSlot>
        </Omnibox>
        <ToolSlot><Svg><path d="M4.300 4C2 4 3.500 7.500 1.500 8c2 .5.500 4 2.800 4M11.700 4c2.300 0 .8 3.500 2.800 4-2 .5-.5 4-2.800 4M6 6.500h4M6 9.500h4M6 8h4" stroke="#222" strokeWidth="1.200" /></Svg></ToolSlot>
        <ToolSlot><Svg><g transform="rotate(-8 8 8)"><rect x="1" y="3" width="14" height="10" rx="2" fill="#5c5d5d" stroke="#323333" /><rect x="4" y="5.500" width="8" height="5" fill="#777" stroke="#c9c9c9" strokeWidth=".8" /><path d="M8 5.500l.8 1.700 1.800.2-1.400 1.200.4 1.800L8 9.500l-1.600.9.4-1.800-1.400-1.200 1.800-.2z" fill="#222" /></g></Svg></ToolSlot>
        <ToolSlot><GoogleTranslate /></ToolSlot>
        <ToolSlot><Svg><rect width="16" height="16" fill="#2d8fd9" /><path d="M6.500 2h3v6H12l-4 4-4-4h2.500zM4 13.500h8v1H4z" fill="#fff" /></Svg></ToolSlot>
        <ToolSlot><PuzzleIcon /></ToolSlot>
        <ToolSlot><Svg><path d="M0 3h10M0 7h10M0 11h6M13 3v9M12 3.500h4" stroke="#202124" strokeWidth="1.700" /><circle cx="11.500" cy="12" r="2.300" fill="#202124" /></Svg></ToolSlot>
        <ToolSlot><Svg><rect x="2" y="2" width="12" height="12" stroke="#202124" strokeWidth="2" /><path d="M9 2h5v12H9z" fill="#202124" /></Svg></ToolSlot>
        <ToolSlot><Portrait /></ToolSlot>
        <ToolSlot $w={33}><Svg><circle cx="8" cy="3" r="1.600" fill="#202124" /><circle cx="8" cy="8" r="1.600" fill="#202124" /><circle cx="8" cy="13" r="1.600" fill="#202124" /></Svg></ToolSlot>
      </Toolbar>

      <BookmarkBar>
        {BOOKMARKS.map(([w, Icon, label, ls]) => (
          <Bookmark key={label} $w={w} $ls={ls}><Icon />{label}</Bookmark>
        ))}
        <Svg w={12} h={10} vb="0 0 12 10"><path d="M2 1.800 5 5 2 8.200M6.500 1.800l3 3.200-3 3.200" stroke="#202124" strokeWidth="1.700" /></Svg>
        <Divider />
        <Bookmark $w={110} $ls={-0.36} $gap={9}><Folder />All Bookmarks</Bookmark>
      </BookmarkBar>

      <Page>
        <Backdrop />
        <Login>
          <Realm>PRODUCT-REALM</Realm>
          <Card>
            <CardTitle>Sign in to your account</CardTitle>
            <Label>Username or email</Label>
            <UserField><Caret /></UserField>
            <Label>Password</Label>
            <PasswordRow>
              <PasswordField />
              <Reveal><EyeIcon /></Reveal>
            </PasswordRow>
            <Submit>Sign In</Submit>
          </Card>
        </Login>
      </Page>

      <Taskbar>
        <Start><WinLogo /></Start>
        <Search>
          <Svg s={17}><circle cx="9.800" cy="6" r="4.800" stroke="#222" strokeWidth="1.200" /><path d="M6.500 9.500 1 15" stroke="#222" strokeWidth="1.300" /></Svg>
          <SearchText>Taper ici pour rechercher</SearchText>
          <AlarmClock />
          <GiftSlot><Gift /></GiftSlot>
        </Search>
        <AppSlot $w={50}><TaskView /></AppSlot>
        {APPS.map(([Icon, state], i) => (
          <AppSlot key={i} $active={state === "active"}>
            <Icon />
            {state && <Underline $full={state === "active"} $stack={state === "stack"} />}
          </AppSlot>
        ))}
        <Tray>
          <TrayItem $w={26}><WeatherIcon /></TrayItem>
          <Temperature $w={45}>16°C</Temperature>
          <TrayItem $w={47}><TrayLine d="M3.500 12l5.500-6 5.500 6" /></TrayItem>
          <TrayItem $w={2}><TrayLine d="M4.500 5.500h7v7h-7zM11.500 8l3-2v6l-3-2M5 2.500c2-1.300 5-1.300 7 0M5 15.500c2 1.300 5 1.300 7 0" /></TrayItem>
          <TrayItem $w={45}><BatteryIcon /></TrayItem>
          <TrayItem $w={6}><TrayLine d="M2.500 14C3 8 8 4 15 3.500M5.500 15C6 10.500 9.500 7 15 6.500M8.500 15.500c.5-3 3-5.500 6.500-6M11.500 16c.3-1.800 1.600-3 3.500-3.300v3z" /></TrayItem>
          <TrayItem $w={39}><TrayLine d="M1.500 7h3l4-3.500v11L4.500 11h-3zM10.500 7c1 1 1 3 0 4M12.500 5c2.200 2 2.200 6 0 8M14.700 3.200c3 3 3 8.600 0 11.600" /></TrayItem>
          <Language $w={21}>FRA</Language>
          <Clock>23:25<br />27/11/2023</Clock>
          <TrayItem $w={36}>
            <svg width="26" height="26" viewBox="0 0 26 26"><path d="M1 3h16v12H9l-4 4v-4H1z" fill="#fff" /><path d="M4 6.500h10M4 9h10M4 11.500h6" stroke="#203047" /><circle cx="16.500" cy="18" r="7.500" fill="#343a43" stroke="#8a9098" /><text x="16.500" y="22" textAnchor="middle" fontFamily="Open Sans" fontWeight="600" fontSize="11" fill="#fff">2</text></svg>
          </TrayItem>
          <ShowDesktop />
        </Tray>
      </Taskbar>
    </Screen>
  );
}
